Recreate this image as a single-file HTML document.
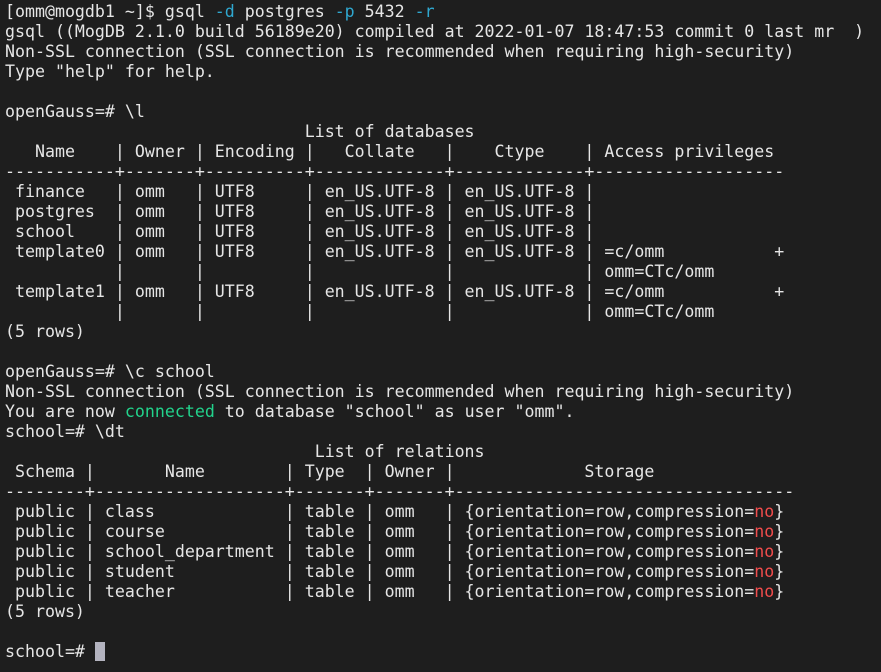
<!DOCTYPE html>
<html><head><meta charset="utf-8"><style>
html,body{margin:0;padding:0;background:#1e1e1e;width:881px;height:672px;overflow:hidden}
pre{margin:0;padding:2px 0 0 5px;font-family:"DejaVu Sans Mono","Liberation Mono",monospace;font-size:16.6px;line-height:20px;color:#e6e6e6;white-space:pre}
.c{color:#2fa8d0}.g{color:#22d38c}.r{color:#f14c4c}
.cur{display:inline-block;width:10px;height:19px;background:#b4b4c0;vertical-align:-4px}
</style></head><body><pre>[omm@mogdb1 ~]$ gsql <span class="c">-d</span> postgres <span class="c">-p</span> 5432 <span class="c">-r</span>
gsql ((MogDB 2.1.0 build 56189e20) compiled at 2022-01-07 18:47:53 commit 0 last mr  )
Non-SSL connection (SSL connection is recommended when requiring high-security)
Type "help" for help.

openGauss=# \l
                              List of databases
   Name    | Owner | Encoding |   Collate   |    Ctype    | Access privileges
-----------+-------+----------+-------------+-------------+-------------------
 finance   | omm   | UTF8     | en_US.UTF-8 | en_US.UTF-8 |
 postgres  | omm   | UTF8     | en_US.UTF-8 | en_US.UTF-8 |
 school    | omm   | UTF8     | en_US.UTF-8 | en_US.UTF-8 |
 template0 | omm   | UTF8     | en_US.UTF-8 | en_US.UTF-8 | =c/omm           +
           |       |          |             |             | omm=CTc/omm
 template1 | omm   | UTF8     | en_US.UTF-8 | en_US.UTF-8 | =c/omm           +
           |       |          |             |             | omm=CTc/omm
(5 rows)

openGauss=# \c school
Non-SSL connection (SSL connection is recommended when requiring high-security)
You are now <span class="g">connected</span> to database "school" as user "omm".
school=# \dt
                               List of relations
 Schema |       Name        | Type  | Owner |             Storage
--------+-------------------+-------+-------+----------------------------------
 public | class             | table | omm   | {orientation=row,compression=<span class="r">no</span>}
 public | course            | table | omm   | {orientation=row,compression=<span class="r">no</span>}
 public | school_department | table | omm   | {orientation=row,compression=<span class="r">no</span>}
 public | student           | table | omm   | {orientation=row,compression=<span class="r">no</span>}
 public | teacher           | table | omm   | {orientation=row,compression=<span class="r">no</span>}
(5 rows)

school=# <span class="cur"></span></pre></body></html>
